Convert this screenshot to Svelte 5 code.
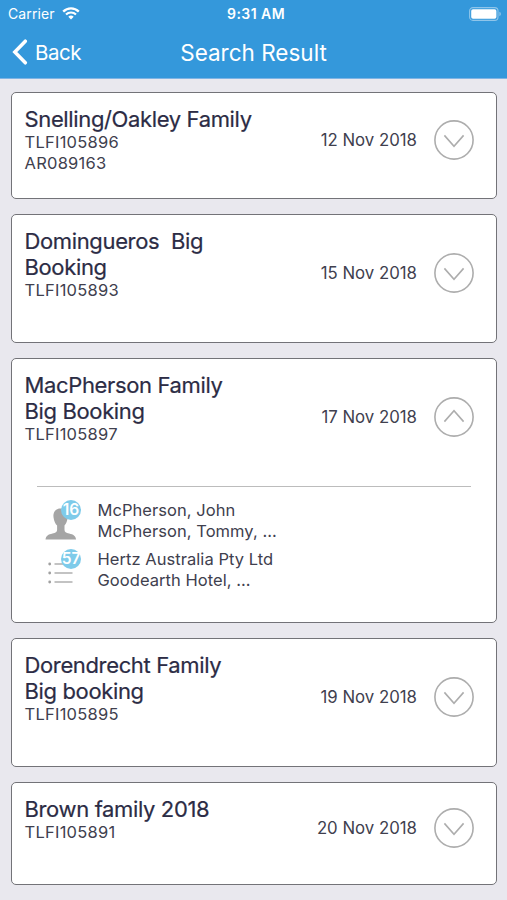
<script>
    let bookings = $state([
        {
            name: ["Snelling/Oakley Family"],
            refs: ["TLFI105896", "AR089163"],
            date: "12 Nov 2018",
            open: false,
        },
        {
            name: ["Domingueros  Big", "Booking"],
            refs: ["TLFI105893"],
            date: "15 Nov 2018",
            open: false,
        },
        {
            name: ["MacPherson Family", "Big Booking"],
            refs: ["TLFI105897"],
            date: "17 Nov 2018",
            open: true,
            people: { count: 16, lines: ["McPherson, John", "McPherson, Tommy, ..."] },
            services: { count: 57, lines: ["Hertz Australia Pty Ltd", "Goodearth Hotel, ..."] },
        },
        {
            name: ["Dorendrecht Family", "Big booking"],
            refs: ["TLFI105895"],
            date: "19 Nov 2018",
            open: false,
        },
        {
            name: ["Brown family 2018"],
            refs: ["TLFI105891"],
            date: "20 Nov 2018",
            open: false,
        },
    ]);

    const toggle = (booking) => {
        booking.open = !booking.open;
    };
</script>

<div class="screen">
    <header>
        <div class="status-bar">
            <div class="carrier">
                <span>Carrier</span>
                <svg width="18" height="13" viewBox="0 0 18 13" fill="none" stroke="currentColor" aria-hidden="true">
                    <path d="M1.2 4.6a11 11 0 0 1 15.6 0" stroke-width="2.3" />
                    <path d="M4 7.6a7 7 0 0 1 10 0" stroke-width="2.1" />
                    <path d="M6.3 9.8a3.9 3.9 0 0 1 5.4 0L9 12.5z" fill="currentColor" stroke="none" />
                </svg>
            </div>
            <span class="time">9:31 AM</span>
            <svg class="battery" width="33" height="14" viewBox="0 0 33 14" aria-hidden="true">
                <rect x="0.6" y="0.6" width="28.4" height="12.8" rx="3.4" fill="none" stroke="#8fc5ea" stroke-width="1.1" />
                <rect x="2.2" y="2.2" width="25.2" height="9.6" rx="1.8" fill="#fff" />
                <path d="M30.4 4.8q1.5.6 1.5 2.2t-1.5 2.2z" fill="#8fc5ea" />
            </svg>
        </div>
        <nav>
            <button class="back">
                <svg width="16" height="26" viewBox="0 0 16 26" aria-hidden="true">
                    <path d="M13.3 2.2 2.8 13l10.5 10.8" fill="none" stroke="currentColor" stroke-width="3.5" stroke-linecap="round" />
                </svg>
                <span>Back</span>
            </button>
            <h1>Search Result</h1>
        </nav>
    </header>

    <main>
        {#each bookings as booking}
            <article>
                <div class="summary">
                    <div class="info">
                        <h2>
                            {#each booking.name as line}
                                <span>{line}</span>
                            {/each}
                        </h2>
                        <div class="refs">
                            {#each booking.refs as ref}
                                <span>{ref}</span>
                            {/each}
                        </div>
                    </div>
                    <time>{booking.date}</time>
                    <button class="toggle" class:open={booking.open} aria-label="Toggle details" onclick={() => toggle(booking)}>
                        <svg width="40" height="40" viewBox="0 0 40 40" fill="none" stroke="#adadad" stroke-width="1.6" aria-hidden="true">
                            <circle cx="20" cy="20" r="19.1" />
                            <path d="m10.4 15.4 9.6 11 9.6-11" />
                        </svg>
                    </button>
                </div>
                {#if booking.open && booking.people}
                    <div class="details">
                        <div class="row">
                            <div class="icon">
                                <svg width="32" height="32" viewBox="0 0 32 32" fill="#a5a5a5" aria-hidden="true">
                                    <path d="M15.3 .5c5 0 7.8 3.600 7.300 8.700-.3 3.900-1.500 6.600-3.100 8.400v4.200c0 2.200 1.500 3 4.600 3.800 4.300 1.100 6.500 2.200 7 5.900H.5c.5-3.700 2.700-4.800 7-5.900 3.100-.8 4.600-1.600 4.600-3.800v-4.200C10.400 16 9 13.200 8.500 9.200 8 4.100 10.500.5 15.300.5z" />
                                </svg>
                                <span class="badge">{booking.people.count}</span>
                            </div>
                            <div class="lines">
                                {#each booking.people.lines as line}
                                    <span>{line}</span>
                                {/each}
                            </div>
                        </div>
                        <div class="row">
                            <div class="icon">
                                <svg width="32" height="32" viewBox="0 0 32 32" aria-hidden="true">
                                    <path d="M9.5 11H27M9.5 20h18M9.5 29h18" stroke="#b0b0b0" stroke-width="1.5" />
                                    <g fill="#a0a0a0">
                                        <circle cx="4.7" cy="11" r="1.4" />
                                        <circle cx="4.7" cy="20" r="1.4" />
                                        <circle cx="4.7" cy="29" r="1.4" />
                                    </g>
                                </svg>
                                <span class="badge">{booking.services.count}</span>
                            </div>
                            <div class="lines">
                                {#each booking.services.lines as line}
                                    <span>{line}</span>
                                {/each}
                            </div>
                        </div>
                    </div>
                {/if}
            </article>
        {/each}
    </main>
</div>

<style>
    :global(body) {
        margin: 0;
        background: #e9e8ee;
    }

    .screen {
        box-sizing: border-box;
        height: 900px;
        overflow: hidden;
        background: #e9e8ee;
        color: #40404e;
        font-family: Inter, "Liberation Sans", sans-serif;
    }

    button {
        padding: 0;
        border: none;
        background: none;
        color: inherit;
        font: inherit;
        cursor: pointer;
    }

    header {
        box-sizing: border-box;
        height: 79px;
        background: #3498db;
        border-bottom: 1px solid #7fb4e4;
        color: #fff;
    }

    .status-bar {
        display: grid;
        grid-template-columns: 1fr auto 1fr;
        align-items: center;
        height: 27px;
        padding: 0 5px 0 8px;
        font-size: 14px;
    }

    .carrier {
        display: flex;
        align-items: center;
        gap: 7px;
        letter-spacing: 0.1px;
    }

    .time {
        padding-left: 2px;
        font-weight: 600;
        letter-spacing: 0.45px;
    }

    .battery {
        justify-self: end;
    }

    nav {
        display: grid;
        grid-template-columns: 1fr auto 1fr;
        align-items: center;
        height: 50px;
        padding: 0 12px;
    }

    .back {
        display: flex;
        align-items: center;
        gap: 7px;
        font-size: 20.5px;
        letter-spacing: -0.5px;
    }

    h1 {
        margin: 0;
        font-size: 22.5px;
        font-weight: 400;
    }

    main {
        display: flex;
        flex-direction: column;
        gap: 15px;
        padding: 13px 10px 15px 11px;
    }

    article {
        box-sizing: border-box;
        padding: 13px 22px 25px 12.5px;
        border: 1px solid #737378;
        border-radius: 5px;
        background: #fff;
    }

    .summary {
        display: flex;
        align-items: center;
    }

    .info {
        flex: 1;
    }

    h2 {
        margin: 0;
        color: #2c2c45;
        font-size: 22px;
        font-weight: 400;
        letter-spacing: -0.36px;
        line-height: 26px;
        -webkit-text-stroke: 0.2px currentColor;
    }

    h2 span,
    .refs span,
    .lines span {
        display: block;
        white-space: pre;
    }

    .refs {
        min-height: 37px;
        font-size: 16.5px;
        letter-spacing: 0.25px;
        line-height: 20.5px;
    }

    time {
        margin-right: 17px;
        font-size: 16.8px;
    }

    .toggle {
        display: flex;
    }

    .toggle.open {
        transform: rotate(180deg);
    }

    .details {
        display: flex;
        flex-direction: column;
        gap: 7px;
        margin: 25px 3px 7px 12.5px;
        padding-top: 12px;
        border-top: 1px solid #bcbcbc;
    }

    .row {
        display: flex;
        gap: 20.5px;
        padding-left: 8px;
    }

    .icon {
        position: relative;
        width: 32px;
        height: 42px;
    }

    .icon svg {
        display: block;
        margin-top: 9px;
    }

    .row + .row .icon svg {
        margin-top: 5px;
    }

    .badge {
        position: absolute;
        top: 1px;
        left: 16px;
        width: 20px;
        height: 20px;
        border-radius: 50%;
        background: #7ecbea;
        color: #fff;
        font-size: 15.5px;
        font-weight: 600;
        line-height: 20px;
        text-align: center;
    }

    .lines {
        padding-top: 1px;
        margin-bottom: -1px;
        font-size: 16.5px;
        letter-spacing: 0.05px;
        line-height: 21px;
    }
</style>
